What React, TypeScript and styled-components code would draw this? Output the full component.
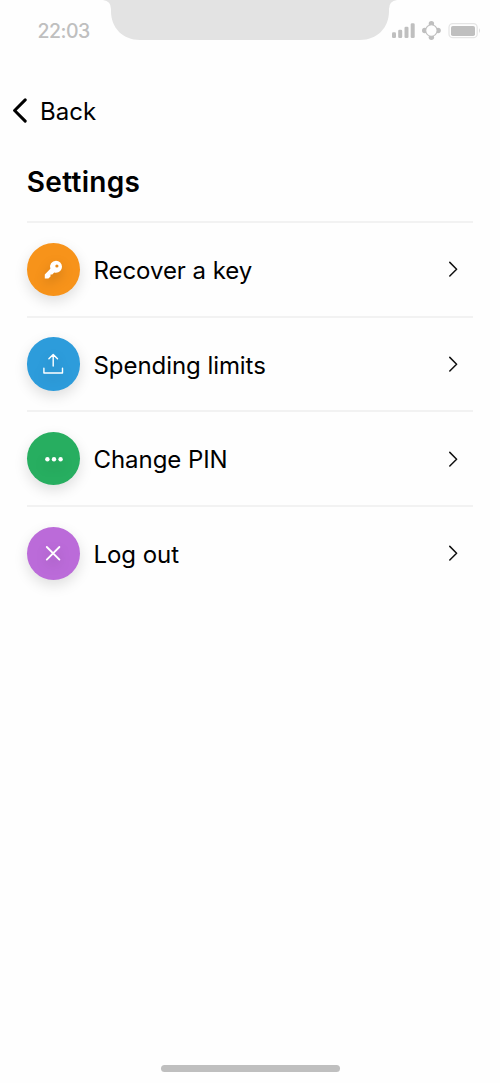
import React from "react";
import styled, { createGlobalStyle } from "styled-components";

const GlobalStyle = createGlobalStyle`
  * { box-sizing: border-box; }
  body { margin: 0; background: #fefefe; }
`;

const Screen = styled.div`
  width: 500px;
  height: 1083px;
  display: flex;
  flex-direction: column;
  background: #fefefe;
  color: #000;
  font-family: Inter, "Liberation Sans", sans-serif;
  overflow: hidden;
`;

const StatusBar = styled.header`
  height: 60px;
  display: flex;
  flex: none;
`;

const Clock = styled.div`
  width: 103px;
  padding: 19px 0 0 37.5px;
  font-size: 19.5px;
  line-height: 24px;
  font-weight: 500;
  letter-spacing: -0.5px;
  color: #bfbfbf;
`;

const Notch = styled.svg`
  width: 294px;
  height: 40px;
  display: block;
`;

const StatusIcons = styled.svg`
  width: 103px;
  height: 60px;
  margin-left: -10px;
  display: block;
`;

const BackLink = styled.a`
  display: flex;
  align-items: center;
  gap: 12px;
  height: 30px;
  margin: 36px 0 0 12px;
  font-size: 24px;
  line-height: 30px;

  span {
    padding-top: 2px;
  }
`;

const Title = styled.h1`
  margin: 39px 0 0 26.8px;
  font-size: 28px;
  line-height: 34px;
  font-weight: 600;
  letter-spacing: 0.3px;
`;

const List = styled.ul`
  list-style: none;
  margin: 22px 27px 0;
  padding: 0;
`;

const Row = styled.li`
  height: 94.67px;
  display: flex;
  align-items: center;
  border-top: 2px solid #f2f2f2;
  padding-right: 14.7px;
`;

const Badge = styled.span<{ $color: string }>`
  width: 53.33px;
  height: 53.33px;
  flex: none;
  display: flex;
  margin-left: -0.33px;
  border-radius: 50%;
  background: ${(p) => p.$color};
  box-shadow: 0 5.33px 13.33px rgba(0, 0, 0, 0.13);

  svg {
    display: block;
    flex: none;
    width: 53.33px;
    height: 53.33px;
    overflow: visible;
    filter: drop-shadow(0 5px 6px rgba(0, 0, 0, 0.17));
  }
`;

const Label = styled.span`
  flex: 1;
  margin-left: 13.5px;
  padding-top: 3.2px;
  font-size: 24px;
  line-height: 30px;
  letter-spacing: -0.06px;
`;

const HomeIndicator = styled.div`
  width: 179px;
  height: 7px;
  margin: auto auto 11px 161px;
  border-radius: 4px;
  background: #bfbfbf;
`;

const KeyIcon = () => (
  <svg viewBox="0 0 53.33 53.33">
    <path
      fill="#fff"
      fillRule="evenodd"
      d="M29 17.7a6 6 0 0 1 0 12q-.9 0-1.8-.2l-1.9 2.1h-1.8v1.9l-2.1 1.9h-3.6v-3.8l5.6-5.8a6 6 0 0 1 5.6-8.1ZM29.9 21.4a1.6 1.6 0 1 0 0 3.2a1.6 1.6 0 0 0 0-3.2Z"
    />
  </svg>
);

const UploadIcon = () => (
  <svg viewBox="0 0 53.33 53.33" fill="none" stroke="#fff" strokeWidth="1.4" strokeLinecap="round" strokeLinejoin="round">
    <path d="M26.2 29V17.4M21.9 21.7L26.2 17.4L30.5 21.7M16.9 31.2V36H35.5V31.2" />
  </svg>
);

const DotsIcon = () => (
  <svg viewBox="0 0 53.33 53.33" fill="#fff">
    <circle cx="20.4" cy="27.3" r="2.2" />
    <circle cx="27" cy="27.3" r="2.2" />
    <circle cx="33.6" cy="27.3" r="2.2" />
  </svg>
);

const CrossIcon = () => (
  <svg viewBox="0 0 53.33 53.33" fill="none" stroke="#fff" strokeWidth="1.8" strokeLinecap="round">
    <path d="M19.8 20L32.4 32.6M32.4 20L19.8 32.6" />
  </svg>
);

const Chevron = () => (
  <svg width="10" height="16" viewBox="0 0 10 16" fill="none" stroke="#111" strokeWidth="1.5" strokeLinecap="round" strokeLinejoin="round">
    <path d="M1.8 1.4L8.6 8.2L1.8 15" />
  </svg>
);

const rows = [
  { label: "Recover a key", color: "#f7931a", Icon: KeyIcon },
  { label: "Spending limits", color: "#2d9cdb", Icon: UploadIcon },
  { label: "Change PIN", color: "#27ae60", Icon: DotsIcon },
  { label: "Log out", color: "#bb6bd9", Icon: CrossIcon },
];

export default function App() {
  return (
    <Screen>
      <GlobalStyle />
      <StatusBar>
        <Clock>22:03</Clock>
        <Notch viewBox="0 0 294 40">
          <path fill="#e3e3e3" d="M0 0Q8 1 8 9V11C8 28 20 40 37 40H257C274 40 286 28 286 11V9Q286 1 294 0Z" />
        </Notch>
        <StatusIcons viewBox="387 0 103 60">
          <g fill="#bfbfbf">
            <rect x="392" y="32.3" width="4" height="5.7" rx="1.3" />
            <rect x="398.2" y="29.7" width="4" height="8.3" rx="1.3" />
            <rect x="404.5" y="26.7" width="4" height="11.3" rx="1.3" />
            <rect x="410.7" y="23.3" width="4" height="14.7" rx="1.3" />
            <circle cx="431.4" cy="23.8" r="2.7" />
            <circle cx="431.4" cy="37.2" r="2.7" />
            <circle cx="424.7" cy="30.5" r="2.7" />
            <circle cx="438.1" cy="30.5" r="2.7" />
            <rect x="451" y="26" width="24" height="10" rx="1.8" />
          </g>
          <circle cx="431.4" cy="30.5" r="5.7" fill="#fefefe" stroke="#bfbfbf" strokeWidth="1.1" />
          <rect x="449" y="23.7" width="28.2" height="14" rx="3.8" fill="none" stroke="#e5e5e5" strokeWidth="1.3" />
          <path d="M479 28.3Q481 30.5 479 33Z" fill="#dcdcdc" />
        </StatusIcons>
      </StatusBar>
      <BackLink>
        <svg width="16" height="26" viewBox="0 0 16 26" fill="none" stroke="#000" strokeWidth="3" strokeLinecap="round" strokeLinejoin="round">
          <path d="M13.2 1.9L2.6 12.5L13.2 23.1" />
        </svg>
        <span>Back</span>
      </BackLink>
      <Title>Settings</Title>
      <List>
        {rows.map(({ label, color, Icon }) => (
          <Row key={label}>
            <Badge $color={color}>
              <Icon />
            </Badge>
            <Label>{label}</Label>
            <Chevron />
          </Row>
        ))}
      </List>
      <HomeIndicator />
    </Screen>
  );
}
